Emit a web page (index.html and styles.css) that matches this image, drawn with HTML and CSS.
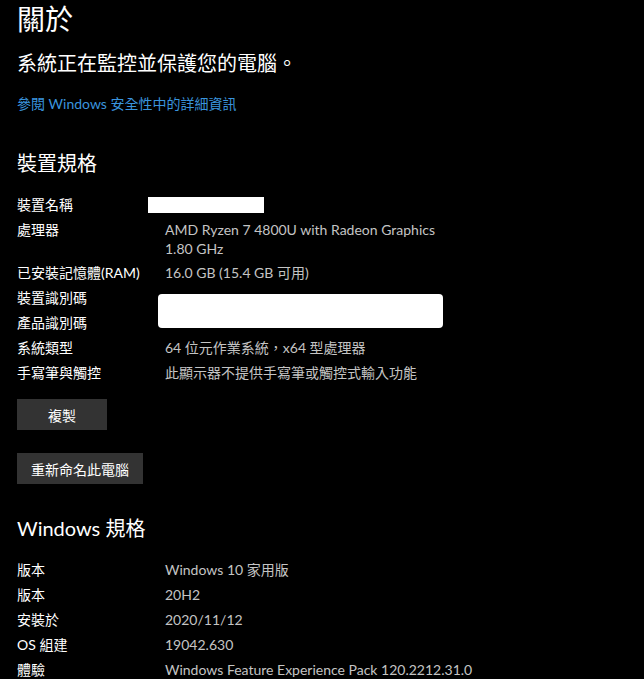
FILE: index.html
```html
<!DOCTYPE html>
<html lang="zh-Hant">
<head>
<meta charset="utf-8">
<link rel="stylesheet" href="styles.css">
</head>
<body>
<main class="page">
  <h1 class="title">關於</h1>
  <p class="subtitle">系統正在監控並保護您的電腦。</p>
  <a class="link" href="#">參閱 Windows 安全性中的詳細資訊</a>

  <h2 class="section">裝置規格</h2>
  <div class="specs">
    <div class="row"><span class="label">裝置名稱</span><span class="value"><span class="redact small"></span></span></div>
    <div class="row"><span class="label">處理器</span><span class="value">AMD Ryzen 7 4800U with Radeon Graphics<br>1.80 GHz</span></div>
    <div class="row"><span class="label">已安裝記憶體(RAM)</span><span class="value">16.0 GB (15.4 GB 可用)</span></div>
    <div class="idgroup">
      <div class="labels">
        <div class="row"><span class="label">裝置識別碼</span></div>
        <div class="row"><span class="label">產品識別碼</span></div>
      </div>
      <span class="redact big"></span>
    </div>
    <div class="row"><span class="label">系統類型</span><span class="value">64 位元作業系統，x64 型處理器</span></div>
    <div class="row"><span class="label">手寫筆與觸控</span><span class="value">此顯示器不提供手寫筆或觸控式輸入功能</span></div>
  </div>
  <button class="btn copy">複製</button>
  <button class="btn rename">重新命名此電腦</button>

  <h2 class="section win">Windows 規格</h2>
  <div class="specs">
    <div class="row"><span class="label">版本</span><span class="value">Windows 10 家用版</span></div>
    <div class="row"><span class="label">版本</span><span class="value">20H2</span></div>
    <div class="row"><span class="label">安裝於</span><span class="value">2020/11/12</span></div>
    <div class="row"><span class="label">OS 組建</span><span class="value">19042.630</span></div>
    <div class="row"><span class="label">體驗</span><span class="value">Windows Feature Experience Pack 120.2212.31.0</span></div>
  </div>
</main>
</body>
</html>
```

FILE: styles.css
```css
html, body {
  margin: 0;
  background: #000;
}
body {
  font-family: "Segoe UI", Lato, "Noto Sans CJK TC", sans-serif;
  color: #fff;
  overflow: hidden;
}
.page {
  padding: 0 0 0 17px;
  display: flex;
  flex-direction: column;
  align-items: flex-start;
}
.title {
  margin: 0;
  font-size: 28px;
  font-weight: 400;
  line-height: 38px;
}
.subtitle {
  margin: 12px 0 0;
  font-size: 20px;
  line-height: 26px;
}
.link {
  margin-top: 18px;
  color: #3a94dd;
  text-decoration: none;
  font-size: 14px;
  line-height: 20px;
}
.section {
  margin: 35px 0 0;
  font-size: 20px;
  font-weight: 400;
  line-height: 28px;
}
.section.win {
  margin-top: 30px;
}
.specs {
  margin-top: 18px;
  display: flex;
  flex-direction: column;
  width: 600px;
}
.row {
  display: flex;
  font-size: 14px;
  line-height: 20px;
  padding-bottom: 5px;
}
.label {
  width: 148px;
  flex: none;
  color: #fff;
}
.value {
  color: #c4c4c4;
  line-height: 19px;
}
.redact {
  display: block;
  background: #fff;
}
.redact.small {
  width: 116px;
  height: 16px;
  margin-left: -17px;
  margin-top: 2px;
}
.idgroup {
  display: flex;
  align-items: center;
}
.idgroup .labels {
  display: flex;
  flex-direction: column;
}
.redact.big {
  width: 285px;
  height: 34px;
  border-radius: 4px;
  margin-left: -7px;
  margin-top: -5px;
}
.btn {
  margin-top: 11px;
  height: 31px;
  background: #333;
  color: #fff;
  border: 0;
  font-family: inherit;
  font-size: 14px;
  padding: 0;
}
.btn.copy {
  width: 90px;
}
.btn.rename {
  width: 126px;
  margin-top: 23px;
}
```
